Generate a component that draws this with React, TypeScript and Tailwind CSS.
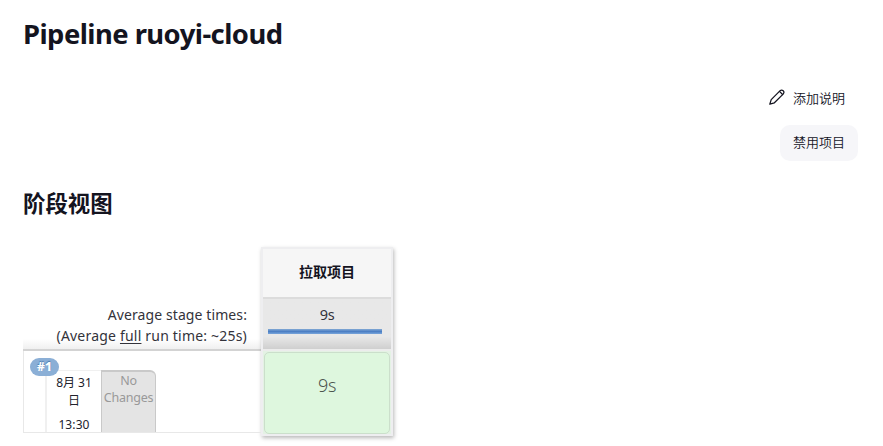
function PencilIcon() {
  return (
    <svg className="h-4 w-4" viewBox="0 0 16 16" fill="none" stroke="#14141f" strokeWidth="1.25" strokeLinejoin="round" strokeLinecap="round">
      <path d="M.8 15.2 L2.2 10.6 L10.9 1.9 Q12.6 .3 14.2 1.8 Q15.7 3.4 14.1 5.1 L5.4 13.8 Z" />
      <path d="M10.5 2.4 L13.6 5.5" />
    </svg>
  );
}

function PageActions() {
  return (
    <div className="mt-[21px] flex flex-col items-end pr-[25px] text-[13px] font-[350] text-[#14141f]">
      <div className="flex h-9 items-center gap-2 pr-[13px]">
        <div className="-mt-1"><PencilIcon /></div>
        <span>添加说明</span>
      </div>
      <div className="mt-2 flex h-9 w-[78px] items-center justify-center rounded-[10px] bg-[#f6f6f9]">禁用项目</div>
    </div>
  );
}

function RunSummary() {
  return (
    <div className="relative flex h-[82px] border-b border-l border-[#e8e8e8] pl-[21px]">
      <span className="absolute left-[6px] top-[7px] flex h-[18px] w-[29px] items-center justify-center rounded-full bg-[#8bafd6] text-[12px] font-extrabold text-white [text-shadow:0_-1px_1px_#4878ac]">#1</span>
      <div className="mt-[19px] w-[56px] border-l-2 border-t border-[#f0f0f0] pt-[3px] text-center text-[12px] leading-[18px] text-[#22222c]">
        <div>8月 31</div>
        <div>日</div>
        <div className="mt-[6px] leading-[17px] tracking-[0.1px]">13:30</div>
      </div>
      <div className="mt-[19px] w-[55px] rounded-tr-[6px] border-l border-r border-t-2 border-[#c9c9c9] bg-[#e4e4e4] text-center text-[12.5px] leading-[17px] tracking-[-0.25px] text-[#999]">
        <div>No</div>
        <div className="-mx-1">Changes</div>
      </div>
    </div>
  );
}

function StageColumn() {
  return (
    <div className="flex h-[189px] w-[132px] flex-col border-2 border-[#eeeef0] bg-[#ececec] shadow-[1px_2px_4px_rgba(0,0,0,0.28)]">
      <div className="flex h-[50px] items-center justify-center border-b-2 border-[#dcdcdc] bg-[#f6f6f6] pb-[3px] text-[14px] font-bold text-[#14141f]">拉取项目</div>
      <div className="h-[50px] bg-linear-to-b from-[#e8e8e8] from-75% to-[#cfcfcf] px-[5px] pt-[5px]">
        <div className="text-center text-[14.5px] leading-5 tracking-[-0.4px] text-[#33333b]">9s</div>
        <div className="mt-[5px] h-[5px] w-[114px] bg-linear-to-b from-[#83a9d4] via-[#4c7fc4] to-[#78a5db]" />
      </div>
      <div className="mt-[2px] flex grow flex-col bg-[#e4f2e4] px-[1px] pt-[1px]">
        <div className="flex h-[82px] items-start justify-center rounded-[5px] border border-[#cbdfcb] bg-[#def7de] pt-[19px] text-[18px] leading-[26px] font-light tracking-[-0.4px] text-[#4c554f]">9s</div>
      </div>
    </div>
  );
}

export default function App() {
  return (
    <main className="h-[446px] w-[883px] overflow-hidden bg-white font-['Noto_Sans','Noto_Sans_CJK_SC',sans-serif]">
      <h1 className="pl-[23px] pt-[14px] text-[27.4px] leading-[40px] font-bold tracking-[-0.54px] text-[#14141f]">Pipeline ruoyi-cloud</h1>
      <div className="h-[6px]" />
      <PageActions />
      <h2 className="mt-[27px] pl-[23px] text-[22.4px] leading-[32px] font-bold text-[#14141f]">阶段视图</h2>
      <div className="mt-[27px] flex pl-[23px]">
        <div className="w-[238px]">
          <div className="h-[104px] border-b-2 border-[#d3d3d3] bg-linear-to-b from-white from-90% to-[#f0f0f0] pr-[14px] pt-[57px] text-right text-[14px] leading-[21px] text-[#33333b]">
            <div className="tracking-[0.1px]">Average stage times:</div>
            <div className="tracking-[0.2px]">(Average <u className="underline-offset-2">full</u> run time: ~25s)</div>
          </div>
          <RunSummary />
        </div>
        <StageColumn />
      </div>
    </main>
  );
}
